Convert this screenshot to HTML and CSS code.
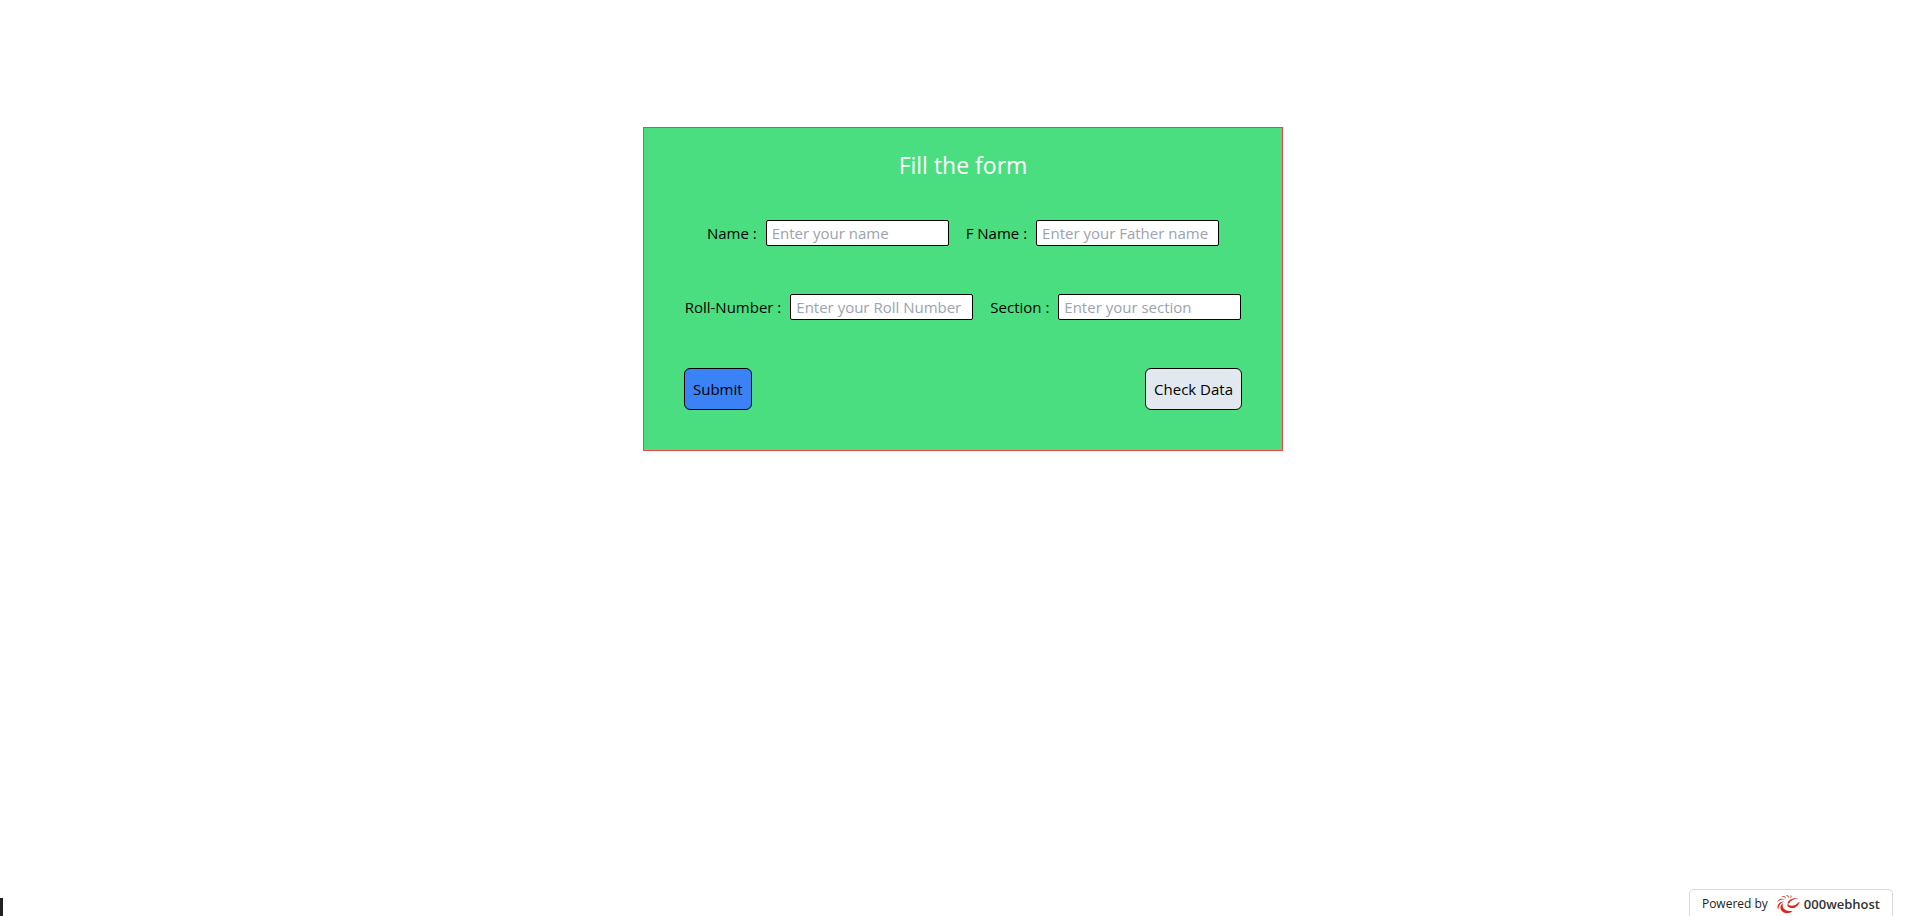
FILE: index.html
```
<!DOCTYPE html>
<html lang="en">
<head>
<meta charset="utf-8">
<meta name="viewport" content="width=device-width, initial-scale=1">
<title>Fill the form</title>
<link rel="stylesheet" href="styles.css">
</head>
<body>
<main class="page">
  <form class="card">
    <h1 class="title">Fill the form</h1>
    <div class="row">
      <label class="label" for="name">Name :</label>
      <input class="field" id="name" type="text" placeholder="Enter your name">
      <label class="label label-next" for="fname">F Name :</label>
      <input class="field" id="fname" type="text" placeholder="Enter your Father name">
    </div>
    <div class="row">
      <label class="label" for="roll">Roll-Number :</label>
      <input class="field" id="roll" type="text" placeholder="Enter your Roll Number">
      <label class="label label-next" for="section">Section :</label>
      <input class="field" id="section" type="text" placeholder="Enter your section">
    </div>
    <div class="actions">
      <button class="button submit" type="button">Submit</button>
      <button class="button check" type="button">Check Data</button>
    </div>
  </form>
</main>
<div class="status"></div>
<a class="badge" href="#">
  <span class="powered">Powered by</span>
  <svg class="logo" viewBox="0 0 24 20" aria-hidden="true">
    <g fill="#e0251b">
      <path d="M11.500 9.500C14 13 19 12.500 23.500 7.500C22.500 14 15 16 11.500 12Z"/>
      <path d="M7 9C5.500 14 9 17.500 16.500 17C11.500 21.500 3.500 18.500 4.500 12.500C5 11 6 9.800 7 9Z"/>
      <path d="M11.500 9.500C12 6.500 16 3.500 22 4.500C17.500 5 14.500 6.500 13 9.500Z"/>
      <path d="M8.500 7.500C5 8.500 2.500 11 2.200 16C.2 11.500 3 7 8.500 7.500Z"/>
      <path d="M9 6C6 5 3 6 1 8.500C2 5 6 3.500 9 6Z"/>
      <path d="M10 5C9 3 7.500 2.500 5 2.800C7.500 1.300 10 2.200 10 5Z"/>
      <path d="M12 4.500C12.200 2.800 11.500 1.800 10 1C12.500 1 13.500 2.800 12 4.500Z"/>
      <path d="M13.800 4.200C14.800 3.200 15 2 14.500 1C16.200 2 16 3.500 13.800 4.200Z"/>
    </g>
  </svg>
  <span class="brand">000webhost</span>
</a>
</body>
</html>
```
FILE: styles.css
```
* {
  box-sizing: border-box;
}

body {
  margin: 0;
  min-height: 100vh;
  background: #fff;
  color: #000;
  font-family: "Segoe UI", "Open Sans", "Noto Sans", sans-serif;
  font-size: 15px;
  line-height: 24px;
}

.page {
  display: flex;
  justify-content: center;
  padding: 127px 0 40px 8px;
}

.card {
  width: 640px;
  max-width: 100%;
  padding: 21px 40px 40px;
  border: 1px solid #ef4444;
  background: #4ade80;
}

.title {
  margin: 0 0 39px;
  color: #fff;
  font-size: 23px;
  font-weight: 400;
  line-height: 32px;
  text-align: center;
}

.row {
  display: flex;
  align-items: center;
  justify-content: center;
  gap: 9px;
  margin-bottom: 48px;
}

.label {
  white-space: nowrap;
}

.label-next {
  margin-left: 8px;
}

.field {
  width: 183px;
  height: 26px;
  padding: 0 5px;
  border: 1px solid #000;
  border-radius: 2px;
  background: #fff;
  font: inherit;
}

.field::placeholder {
  color: #9ca3af;
  opacity: 1;
}

.actions {
  display: flex;
  justify-content: space-between;
}

.button {
  padding: 8px;
  border: 1px solid #000;
  border-radius: 6px;
  color: #000;
  font: inherit;
}

.submit {
  background: #3b82f6;
}

.check {
  background: #e2e8f0;
}

.status {
  position: fixed;
  left: 0;
  bottom: 0;
  width: 3px;
  height: 18px;
  background: #202124;
}

.badge {
  position: fixed;
  right: 25px;
  bottom: 0;
  display: flex;
  align-items: center;
  height: 27px;
  padding: 2px 12px 0;
  border: 1px solid #d9d9d9;
  border-bottom: 0;
  border-radius: 5px 5px 0 0;
  background: #fff;
  color: #222;
  font-family: "Open Sans", sans-serif;
  font-size: 12px;
  line-height: 20px;
  text-decoration: none;
}

.logo {
  width: 24px;
  height: 20px;
  margin: 0 4px 0 8px;
}

.brand {
  color: #333;
  font-size: 13px;
  font-weight: 600;
}
```
